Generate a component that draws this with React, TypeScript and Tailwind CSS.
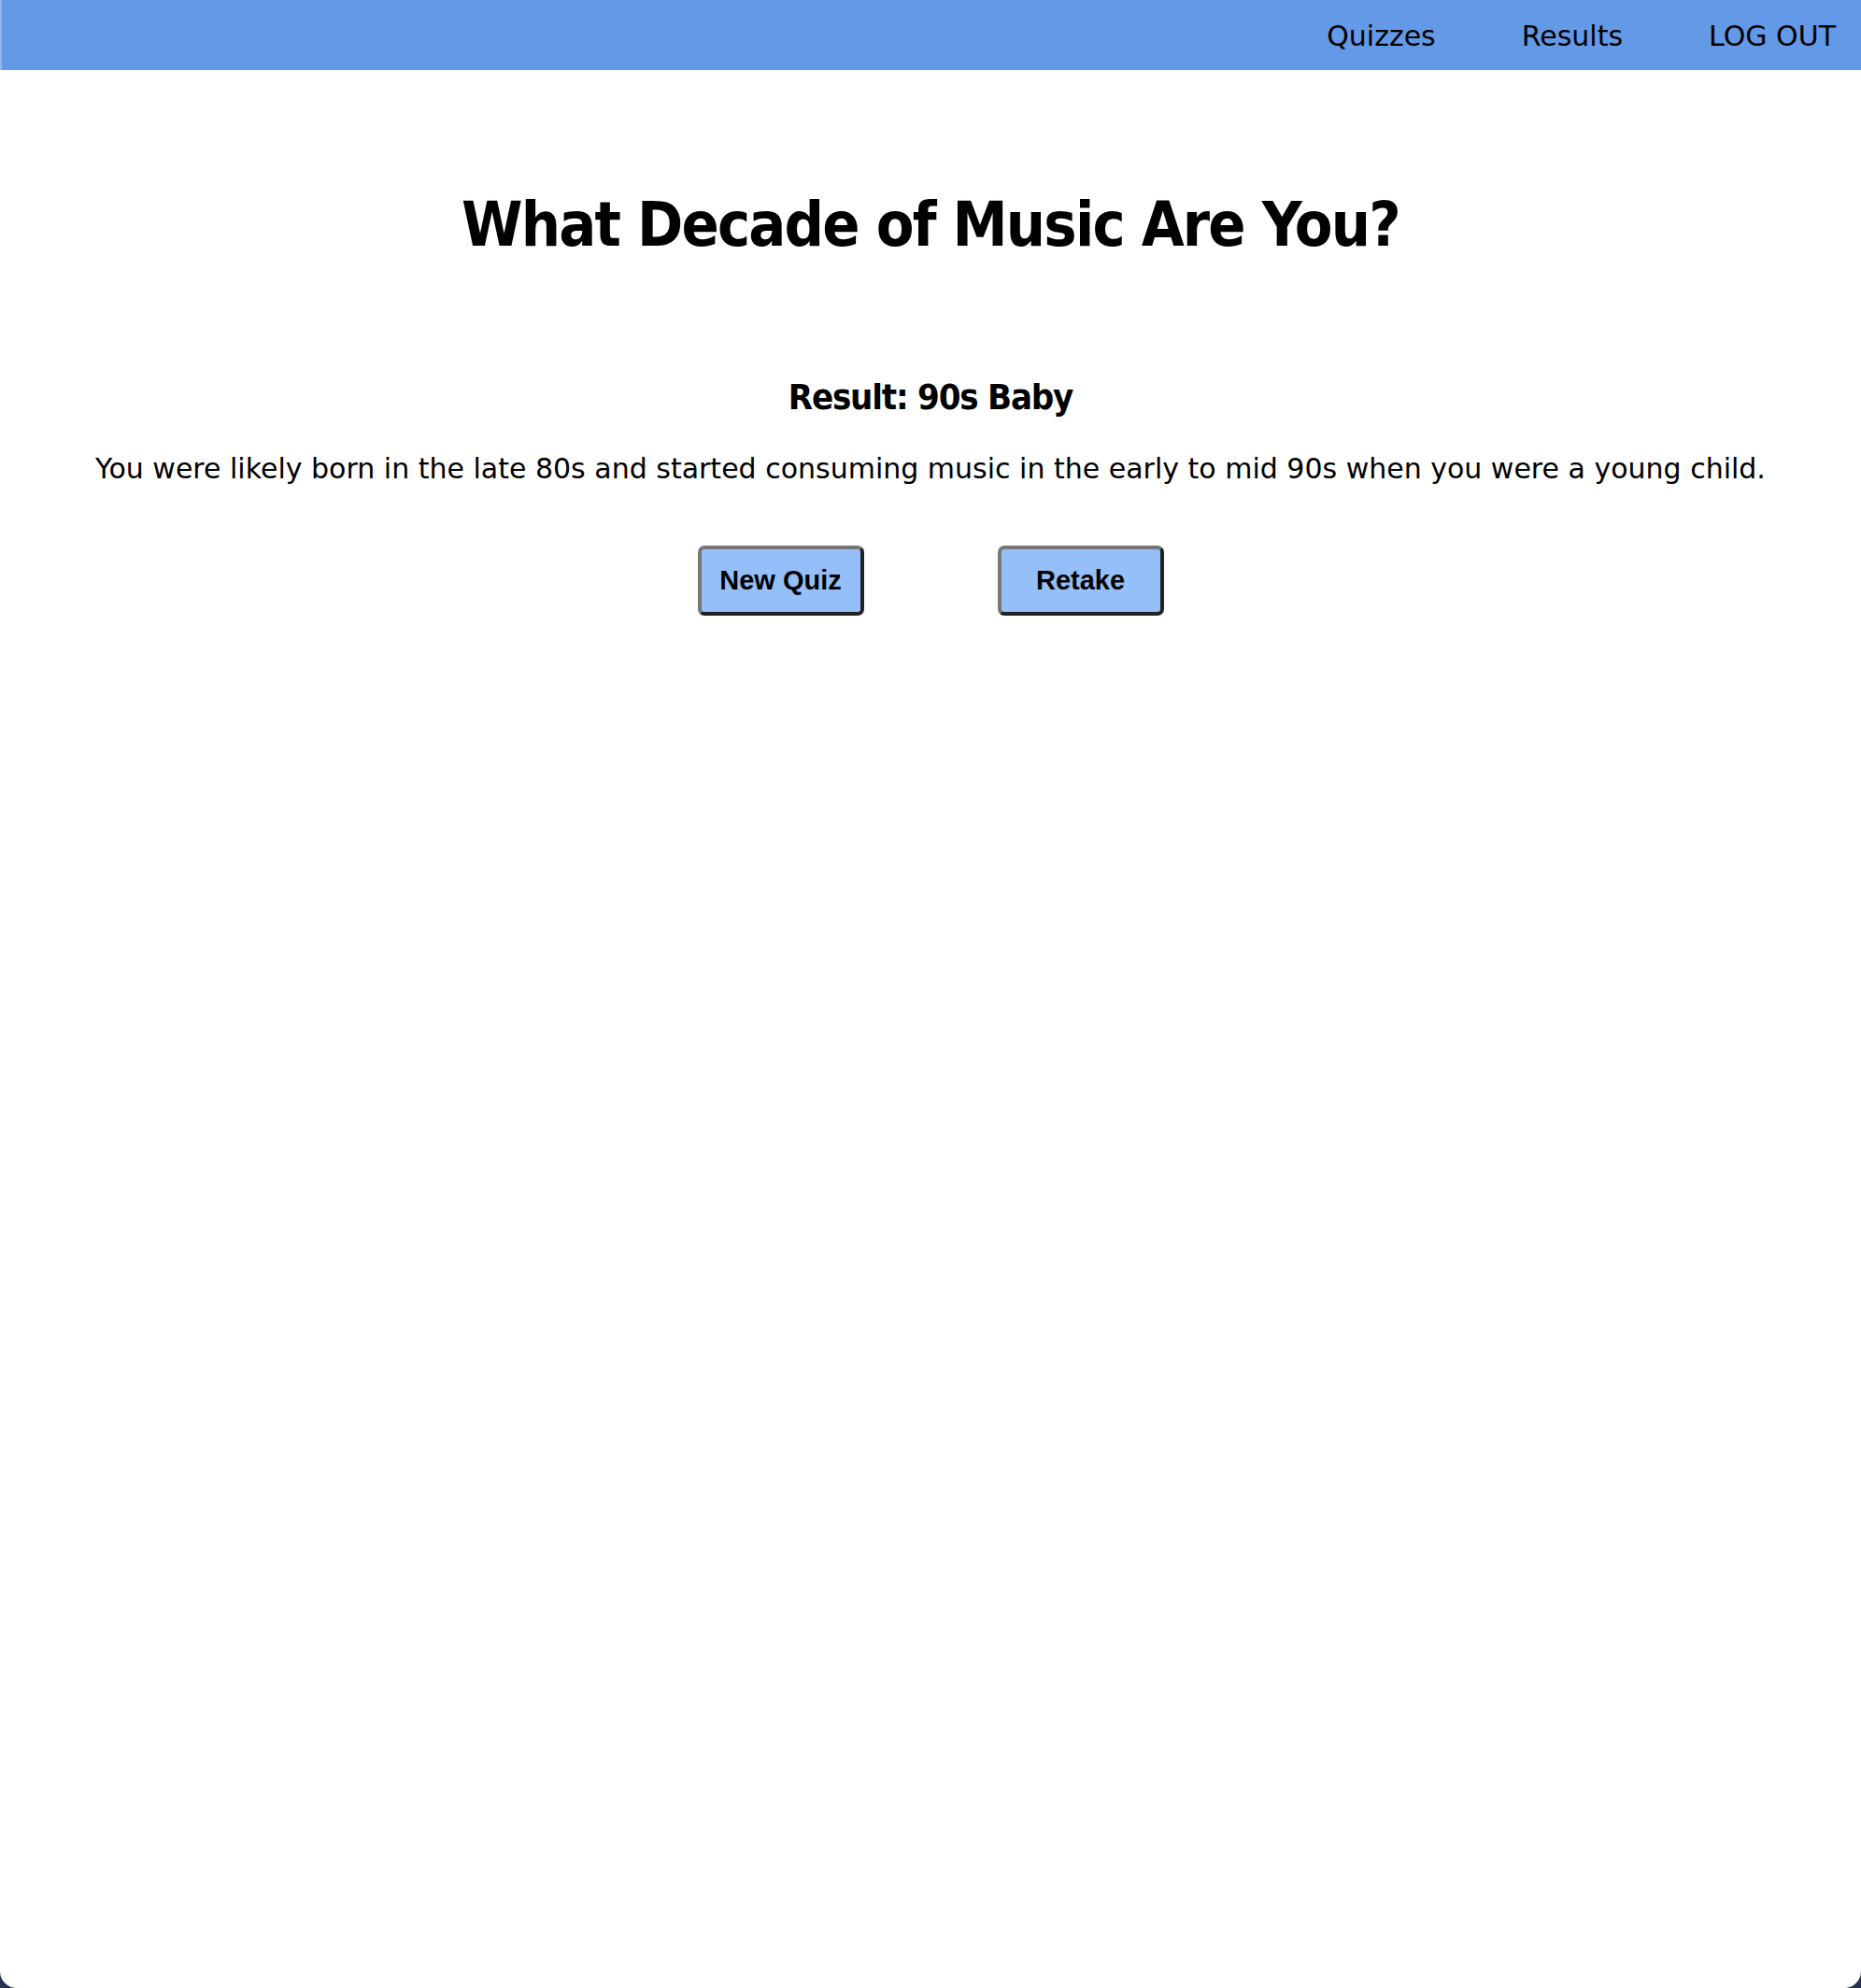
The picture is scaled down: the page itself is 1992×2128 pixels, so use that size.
const NAV = ['Quizzes', 'Results', 'LOG OUT'];

function NavBar() {
  return (
    <header className="flex h-[75px] items-center justify-end gap-[92px] border-l-2 border-[#8fb3ea] bg-[#6399e6] pt-[2px] pr-[27px]">
      {NAV.map((item) => (
        <a key={item} href="#" className="text-[30px] leading-none text-black">
          {item}
        </a>
      ))}
    </header>
  );
}

function QuizButton({ label }: { label: string }) {
  return (
    <button
      type="button"
      className="h-[75px] w-[178px] rounded-[7px] border-4 border-b-[#222] border-l-[#777] border-r-[#222] border-t-[#777] bg-[#94bff9] font-['Liberation_Sans',Arial,sans-serif] text-[29px] font-bold text-black"
    >
      {label}
    </button>
  );
}

export default function App() {
  return (
    <div className="min-h-[2128px] bg-[#26304f]">
      <div className="flex min-h-[2128px] flex-col rounded-b-[18px] bg-white font-['DejaVu_Sans',Verdana,sans-serif] text-black">
        <NavBar />
        <main className="flex flex-col items-center text-center">
          <h1 className="mt-[133px] font-['DejaVu_Sans_Condensed','DejaVu_Sans',sans-serif] text-[66px] font-bold leading-none tracking-[-1.8px]">
            What Decade of Music Are You?
          </h1>
          <h2 className="mt-[132px] font-['DejaVu_Sans_Condensed','DejaVu_Sans',sans-serif] text-[38px] font-bold leading-none tracking-[-1.2px]">
            Result: 90s Baby
          </h2>
          <p className="mt-[43px] text-[30px] leading-none">
            You were likely born in the late 80s and started consuming music in the early to mid 90s when
            you were a young child.
          </p>
          <div className="mt-[67px] flex gap-[143px]">
            <QuizButton label="New Quiz" />
            <QuizButton label="Retake" />
          </div>
        </main>
      </div>
    </div>
  );
}
